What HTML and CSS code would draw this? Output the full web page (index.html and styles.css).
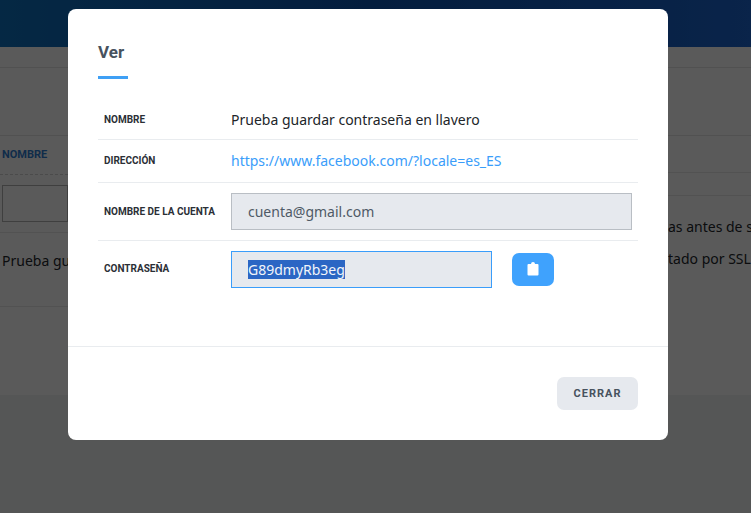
FILE: index.html
```html
<!DOCTYPE html>
<html lang="es">
<head>
<meta charset="utf-8">
<title>Ver</title>
<link rel="stylesheet" href="styles.css">
</head>
<body>
<div class="page">
  <header class="topbar"></header>
  <main class="content">
    <div class="band band-top"></div>
    <div class="band band-mid"></div>
    <div class="table">
      <div class="col-left">
        <div class="th">NOMBRE</div>
        <div class="filter"><div class="filter-box"></div></div>
        <div class="td">Prueba guardar</div>
      </div>
      <div class="col-right">
        <div class="th-r"></div>
        <div class="filter-r"></div>
        <div class="td-r">
          <p>as antes de s</p>
          <p>tado por SSL</p>
        </div>
      </div>
    </div>
  </main>
  <footer class="footer"></footer>
</div>
<div class="backdrop"></div>
<div class="modal">
  <div class="modal-body">
    <h2 class="title">Ver</h2>
    <div class="row">
      <div class="label">NOMBRE</div>
      <div class="value">Prueba guardar contraseña en llavero</div>
    </div>
    <div class="row">
      <div class="label">DIRECCIÓN</div>
      <a class="value link" href="#">https://www.facebook.com/?locale=es_ES</a>
    </div>
    <div class="row row-input">
      <div class="label">NOMBRE DE LA CUENTA</div>
      <div class="field field-wide">cuenta@gmail.com</div>
    </div>
    <div class="row row-pass">
      <div class="label">CONTRASEÑA</div>
      <div class="field field-pass"><span class="selected">G89dmyRb3eg</span></div>
      <button class="copy" type="button" aria-label="Copiar">
        <svg width="12" height="14" viewBox="0 0 12 14"><path fill="#fff" d="M1.5 2H4a2 2 0 0 1 4 0h2.5A1 1 0 0 1 11.500 3v9.500a1 1 0 0 1-1 1h-9a1 1 0 0 1-1-1V3a1 1 0 0 1 1-1z"/></svg>
      </button>
    </div>
  </div>
  <div class="modal-foot">
    <button class="close" type="button">CERRAR</button>
  </div>
</div>
</body>
</html>
```
FILE: styles.css
```css
* { box-sizing: border-box; }
html, body { margin: 0; height: 100%; overflow: hidden; }
body { font-family: "Noto Sans", sans-serif; color: #212529; background: #fff; }

.page { display: flex; flex-direction: column; height: 513px; }
.topbar { height: 47px; background: linear-gradient(90deg, #0f6db8, #0a4fa8 50%, #1b62c8); flex: none; }
.content { flex: 1; background: #f5f5f5; padding-top: 20px; }
.footer { height: 118px; flex: none; background: #e6e9e8; }

.band { border-top: 1px solid #dcdcdc; }
.band-top { height: 68px; }
.band-mid { height: 0; }
.table { display: flex; justify-content: space-between; }
.col-left { width: 68px; }
.col-right { width: 111px; }
.th { height: 39px; padding: 11px 0 0 2px; font: 700 11px/16px Roboto, sans-serif; color: #2d78c9; border-bottom: 1px dashed #ccc; width: 68px; }
.filter { height: 58px; padding-top: 10px; padding-left: 2px; border-bottom: 1px solid #ddd; }
.filter-box { height: 37px; border: 1px solid #aaa; }
.td { height: 74px; padding: 17px 0 0 2px; font-size: 14px; line-height: 22px; white-space: nowrap; overflow: hidden; border-bottom: 1px solid #ddd; }
.th-r { height: 37px; border-bottom: 1px solid #ddd; }
.filter-r { height: 23px; border-bottom: 1px solid #ddd; }
.td-r { font-size: 14px; line-height: 22px; padding-top: 20px; }
.td-r p { margin: 0 0 10px; white-space: nowrap; padding-left: 28px; }

.backdrop { position: fixed; inset: 0; background: rgba(0, 0, 0, 0.63); }
.modal { position: absolute; left: 68px; top: 9px; width: 600px; height: 431px; background: #fff; border-radius: 8px; display: flex; flex-direction: column; }
.modal-body { flex: 1; padding: 32px 30px 0; }
.title { margin: 0 0 21px; padding-bottom: 16px; font: 700 17px/22px Roboto, sans-serif; color: #47525e; position: relative; height: 38px; }
.title::after { content: ""; position: absolute; left: 0; bottom: 0; width: 30px; height: 3px; background: #3fa0f5; }

.row { display: flex; align-items: center; border-bottom: 1px solid #e9ecef; height: 43px; }
.row:first-of-type { height: 40px; }
.row-input { height: 58px; }
.row-pass { height: 56px; border-bottom: 0; }
.label { width: 133px; flex: none; padding-left: 6px; font: 700 10px/14px Roboto, sans-serif; color: #2b2f36; white-space: nowrap; }
.value { font-size: 14px; line-height: 22px; color: #212529; }
.link { color: #3a9dfa; text-decoration: none; }
.field { height: 37px; display: flex; align-items: center; padding: 0 16px; font-size: 14px; color: #4f5a66; background: #e6e9ee; border: 1px solid #b9bec4; }
.field-wide { width: 401px; }
.field-pass { width: 261px; border-color: #3a9dfa; }
.selected { background: #2b66c4; color: #f2f5fa; }
.copy { width: 42px; height: 33px; margin-left: 20px; padding: 0; border: 0; border-radius: 7px; background: #3fa2fd; display: flex; align-items: center; justify-content: center; }
.modal-foot { height: 94px; flex: none; border-top: 1px solid #e9ecef; display: flex; justify-content: flex-end; padding: 30px 30px 0; }
.close { width: 81px; height: 33px; border: 0; border-radius: 7px; background: #e6e9ee; font: 700 11px/33px Roboto, sans-serif; letter-spacing: 1px; color: #47525e; padding: 0; }
```
